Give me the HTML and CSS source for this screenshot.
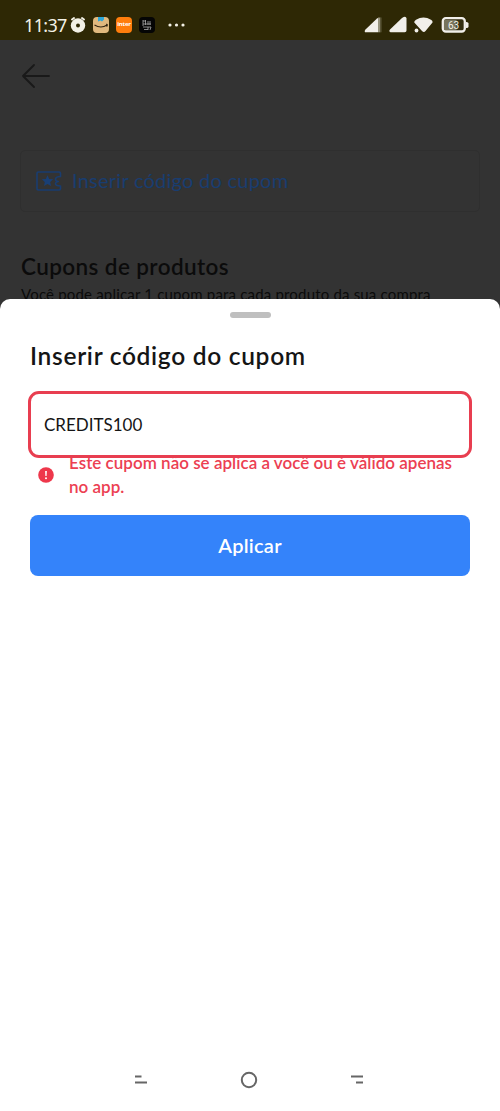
FILE: index.html
```html
<!DOCTYPE html>
<html lang="pt-BR">
<head>
<meta charset="utf-8">
<meta name="viewport" content="width=device-width, initial-scale=1">
<title>Cupons</title>
<link rel="stylesheet" href="styles.css">
</head>
<body>
<div class="phone">
  <header class="status">
    <span class="clock">11:37</span>
    <svg class="alarm" width="16" height="18" viewBox="0 0 16 18"><path d="M2 3.500 4 2M14 3.500 12 2" stroke="#f3f1e6" stroke-width="2" stroke-linecap="round"/><circle cx="8" cy="9.500" r="7.200" fill="#f3f1e6"/><circle cx="8" cy="9.500" r="2" fill="#2e2805"/></svg>
    <svg class="app" width="16" height="16" viewBox="0 0 16 16"><rect width="16" height="16" rx="4" fill="#e0b97e"/><path d="M5 0h6v2.500L9 4.500 7.500 3.500 5 4.500z" fill="#2ca6d8"/><path d="M1.500 8Q8 12 14 8M13.300 7l1 1-.6 1.600" fill="none" stroke="#30240f" stroke-width="1.200"/></svg>
    <span class="inter">inter</span>
    <svg class="app" width="16" height="16" viewBox="0 0 16 16"><rect width="16" height="16" rx="4" fill="#050505"/><path d="M4 3v6M4 4h3M4 7h8M6.500 3v5M9 4v4M11 4v4M4 10h8M9 10v3M5 12.500h4M12 10l-1 3" fill="none" stroke="#aaa" stroke-width=".8"/></svg>
    <svg class="more" width="18" height="4" viewBox="0 0 18 4" fill="#f3f1e6"><circle cx="2" cy="2" r="1.600"/><circle cx="8.500" cy="2" r="1.600"/><circle cx="15" cy="2" r="1.600"/></svg>
    <svg class="signals" width="106" height="18" viewBox="0 0 106 18">
      <path d="M1 16.300Q0 15 1.500 13.500L13 2.400q1-.9 1 .4v13.500z" fill="#f1efea"/><path d="M14 1.500h2.300v14.800H14z" fill="#96937d"/><path d="M16.300 1.500h1.200v14.800h-1.200z" fill="#5e5b3c"/>
      <path d="M26.500 16.300q-2-1-.5-2.800L38 2q4-2.500 4.500.5v12q0 1.800-1.800 1.800z" fill="#f1efea"/>
      <path d="M50.300 6.500Q50 5 52 3.700q7.500-4.600 15 0 2 1.300 1.500 2.800L61.500 15q-1.500 2-3.500 0z" fill="#f1efea"/><circle cx="52.500" cy="14.500" r="1.900" fill="#f1efea"/>
      <rect x="78.800" y="2.200" width="22" height="13.300" rx="3" fill="#332e10" stroke="#f1efea" stroke-width="2.300"/><path d="M80 4h12.500v10H80z" fill="#77745d"/><path d="M102 6h.5q2 0 2 1.500v3q0 1.500-2 1.500h-.5z" fill="#f1efea"/>
      <text class="battery" x="89.500" y="12.600" text-anchor="middle">63</text>
    </svg>
  </header>
  <main class="backdrop">
    <svg class="back" width="28" height="24" viewBox="0 0 28 24" fill="none" stroke="#191919" stroke-width="1.800" stroke-linecap="round" stroke-linejoin="round"><path d="M12 1 1 12l11 11M1 12h26"/></svg>
    <section class="coupon">
      <svg class="ticket" width="26" height="20" viewBox="0 0 26 20"><path d="M2.200 1h21Q24.500 1 24.500 2.200v3.300c-3 0-5 1.200-5 2.800 0 1.300 1.200 2 2.800 2.200-1.600.3-2.800 1-2.800 2.300 0 1.500 2 2.200 5 2.200v2.800q0 1.200-1.300 1.200h-21Q1 19 1 17.800V2.200Q1 1 2.200 1z" fill="none" stroke="#193d70" stroke-width="1.600" stroke-linejoin="round"/><path d="m11.500 4.200 1.700 3.700 4 .4-3 2.700.8 4-3.500-2-3.500 2 .8-4-3-2.700 4-.4z" fill="#193f75"/></svg>
      <span class="coupon-label">Inserir código do cupom</span>
    </section>
    <h1 class="products">Cupons de produtos</h1>
    <p class="description">Você pode aplicar 1 cupom para cada produto da sua compra</p>
  </main>
  <section class="sheet">
    <div class="handle"></div>
    <h2 class="title">Inserir código do cupom</h2>
    <div class="field"><span class="code">CREDITS100</span></div>
    <div class="error">
      <svg class="alert" width="16" height="16" viewBox="0 0 16 16"><circle cx="8" cy="8" r="7.800" fill="#ee374b"/><path d="M7.100 4h1.800l-.3 5H7.400z" fill="#fff"/><circle cx="8" cy="11.300" r="1" fill="#fff"/></svg>
      <p class="message">Este cupom não se aplica a você ou é válido apenas<br>no app.</p>
    </div>
    <button class="apply">Aplicar</button>
    <nav class="nav">
      <svg width="14" height="10" viewBox="0 0 14 10" stroke="#666" stroke-width="2"><path d="M1 1.500h6.500M1 7.500h12"/></svg>
      <svg width="18" height="18" viewBox="0 0 18 18"><circle cx="9" cy="9" r="7.200" fill="none" stroke="#666" stroke-width="2"/></svg>
      <svg width="14" height="10" viewBox="0 0 14 10" stroke="#666" stroke-width="2"><path d="M1 1.500h12M6 7.500h7"/></svg>
    </nav>
  </section>
</div>
</body>
</html>
```
FILE: styles.css
```css
* { box-sizing: border-box; }
body { margin: 0; }
.phone { width: 500px; height: 1111px; display: flex; flex-direction: column; overflow: hidden; background: #333; font-family: Lato, "Open Sans", sans-serif; }
.status { height: 40px; flex: none; display: flex; align-items: center; padding: 10px 30px 0 24px; background: #2e2805; }
.clock { width: 46px; font: 18px/20px "Noto Sans", sans-serif; letter-spacing: -.65px; color: #f3f1e6; }
.alarm { flex: none; }
.app { margin-left: 7px; flex: none; }
.inter { width: 16px; height: 16px; margin-left: 7px; border-radius: 4px; background: #ff7d0c; color: #fff; font: bold 6px/15px "Open Sans", sans-serif; text-align: center; letter-spacing: -.2px; }
.more { margin-left: 13px; }
.signals { margin-left: auto; }
.battery { font: 10px Roboto, sans-serif; fill: #f3f1e6; }
.backdrop { height: 259px; flex: none; padding: 24px 20px 0; }
.back { display: block; margin-left: 2px; }
.coupon { height: 62px; margin-top: 62px; padding-left: 15px; display: flex; align-items: center; gap: 10px; border: 1px solid #2f2f2f; border-radius: 5px; }
.coupon-label { padding-bottom: 2px; font-size: 20px; letter-spacing: .25px; color: #193d70; white-space: nowrap; }
.products { margin: 41px 0 0 1px; font-size: 22.5px; line-height: 28px; font-weight: 600; letter-spacing: .4px; color: #0b0b0b; white-space: nowrap; }
.description { margin: 3px 0 0 1px; font-size: 15px; line-height: 20px; letter-spacing: .18px; color: #0b0b0b; white-space: nowrap; }
.sheet { z-index: 1; flex: 1; padding: 13px 28px 0; display: flex; flex-direction: column; background: #fff; border-radius: 10px 10px 0 0; }
.handle { width: 41px; height: 6px; flex: none; align-self: center; border-radius: 3px; background: #bfbfbf; }
.title { margin: 22px 0 0 2px; font-size: 24.5px; line-height: 32px; font-weight: 600; letter-spacing: .7px; color: #151515; white-space: nowrap; }
.field { z-index: 1; height: 67px; flex: none; margin-top: 19px; padding-left: 13px; display: flex; align-items: center; border: 3px solid #e83e50; border-radius: 11px; background: #fff; }
.code { font-size: 17px; color: #151515; }
.error { display: flex; margin: -7px 0 0 10px; color: #ec4052; }
.alert { flex: none; margin-top: 16px; }
.message { margin: 0 0 0 15px; font-size: 17px; line-height: 24px; font-weight: 600; letter-spacing: .02px; white-space: nowrap; }
.apply { height: 61px; flex: none; margin: 16px 2px 0; padding: 0 0 2px; border: 0; border-radius: 8px; background: #3483fa; color: #fff; font: 600 20px Lato, sans-serif; letter-spacing: .25px; }
.nav { margin: auto 108px 22px 106px; display: flex; align-items: center; justify-content: space-between; }
```
